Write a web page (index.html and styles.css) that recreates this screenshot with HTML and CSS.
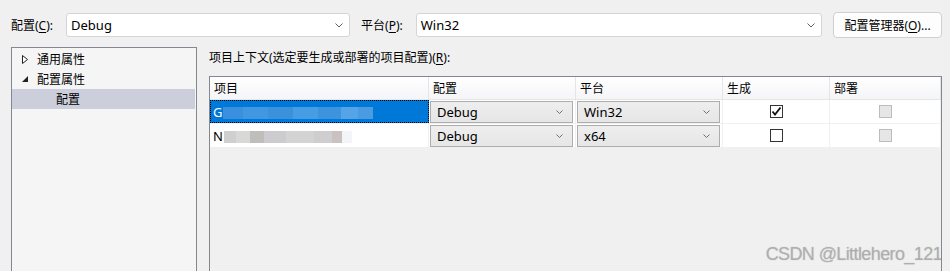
FILE: index.html
```html
<!DOCTYPE html>
<html lang="zh-CN">
<head>
    <meta charset="UTF-8">
    <meta name="viewport" content="width=device-width, initial-scale=1.0">
    <title>配置管理器</title>
    <link rel="stylesheet" href="styles.css">
</head>
<body>
    <div class="toolbar">
        <span class="label">配置(<u>C</u>):</span>
        <div class="combo combo-config">
            <span>Debug</span>
            <svg class="chev" width="8" height="5" viewBox="0 0 8 5"><polyline points="0.5,0.5 4,4 7.5,0.5" fill="none" stroke="#606060" stroke-width="1"/></svg>
        </div>
        <span class="label">平台(<u>P</u>):</span>
        <div class="combo combo-platform">
            <span>Win32</span>
            <svg class="chev" width="8" height="5" viewBox="0 0 8 5"><polyline points="0.5,0.5 4,4 7.5,0.5" fill="none" stroke="#606060" stroke-width="1"/></svg>
        </div>
        <button class="btn">配置管理器(<u>O</u>)...</button>
    </div>

    <div class="main">
        <div class="tree">
            <div class="tree-item">
                <span class="arrow"><svg width="6" height="9" viewBox="0 0 6 9"><polygon points="0.5,0.5 5.5,4.5 0.5,8.5" fill="#fff" stroke="#222" stroke-width="1"/></svg></span>
                <span>通用属性</span>
            </div>
            <div class="tree-item">
                <span class="arrow"><svg width="6" height="6" viewBox="0 0 6 6"><polygon points="6,0 6,6 0,6" fill="#222"/></svg></span>
                <span>配置属性</span>
            </div>
            <div class="tree-item child selected">配置</div>
        </div>

        <div class="content">
            <div class="ctx-label">项目上下文(选定要生成或部署的项目配置)(<u>R</u>):</div>
            <div class="grid">
                <div class="row head">
                    <div class="cell">项目</div>
                    <div class="cell">配置</div>
                    <div class="cell">平台</div>
                    <div class="cell">生成</div>
                    <div class="cell">部署</div>
                </div>
                <div class="row">
                    <div class="cell name focused">G<span class="blur blur-sel"></span></div>
                    <div class="cell"><div class="cell-combo"><span>Debug</span><svg width="7" height="4" viewBox="0 0 7 4"><polyline points="0.5,0.5 3.5,3.5 6.5,0.5" fill="none" stroke="#707070" stroke-width="1"/></svg></div></div>
                    <div class="cell"><div class="cell-combo"><span>Win32</span><svg width="7" height="4" viewBox="0 0 7 4"><polyline points="0.5,0.5 3.5,3.5 6.5,0.5" fill="none" stroke="#707070" stroke-width="1"/></svg></div></div>
                    <div class="cell center"><span class="check"><svg width="11" height="11" viewBox="0 0 11 11"><polyline points="1.5,5.5 4,8.5 9.5,1.5" fill="none" stroke="#111" stroke-width="1.8"/></svg></span></div>
                    <div class="cell center"><span class="check disabled"></span></div>
                </div>
                <div class="row">
                    <div class="cell name">N<span class="blur blur-plain"></span></div>
                    <div class="cell"><div class="cell-combo"><span>Debug</span><svg width="7" height="4" viewBox="0 0 7 4"><polyline points="0.5,0.5 3.5,3.5 6.5,0.5" fill="none" stroke="#707070" stroke-width="1"/></svg></div></div>
                    <div class="cell"><div class="cell-combo"><span>x64</span><svg width="7" height="4" viewBox="0 0 7 4"><polyline points="0.5,0.5 3.5,3.5 6.5,0.5" fill="none" stroke="#707070" stroke-width="1"/></svg></div></div>
                    <div class="cell center"><span class="check"></span></div>
                    <div class="cell center"><span class="check disabled"></span></div>
                </div>
            </div>
        </div>
    </div>

    <div class="watermark">CSDN @Littlehero_121</div>
</body>
</html>
```

FILE: styles.css
```css
body {
    margin: 0;
    width: 950px;
    height: 271px;
    overflow: hidden;
    position: relative;
    background: #f0f0f0;
    color: #000;
    font-family: "Noto Sans", "Noto Sans CJK SC", sans-serif;
    font-size: 12px;
}

u {
    text-decoration-thickness: 1px;
    text-underline-offset: 2px;
}

.toolbar {
    display: flex;
    align-items: center;
    height: 26px;
    padding: 12px 8px 0 11px;
}

.label {
    margin-right: 13px;
}

.combo {
    height: 24px;
    box-sizing: border-box;
    display: flex;
    align-items: center;
    justify-content: space-between;
    padding: 0 6px 0 4px;
    background: #fff;
    border: 1px solid #d5d5d5;
    border-radius: 3px;
    font-size: 13px;
}

.combo-config {
    width: 284px;
    margin-right: 11px;
}

.combo-platform {
    flex: 1;
    margin-right: 11px;
}

.btn {
    width: 109px;
    height: 26px;
    padding: 0;
    background: #fdfdfd;
    border: 1px solid #d0d0d0;
    border-radius: 4px;
    font-family: inherit;
    font-size: 12px;
    color: #000;
}

.main {
    display: flex;
    margin-top: 9px;
}

.tree {
    width: 186px;
    height: 230px;
    box-sizing: border-box;
    margin-left: 11px;
    padding-top: 1px;
    background: #f5f5f5;
    border: 1px solid #828790;
    border-bottom: none;
}

.tree-item {
    display: flex;
    align-items: center;
    height: 20px;
    padding-left: 10px;
}

.arrow {
    width: 10px;
    margin-right: 5px;
    display: flex;
    align-items: center;
}

.tree-item.child {
    padding-left: 44px;
}

.tree-item.selected {
    margin: 0 1px 0 0;
    background: #cccedb;
}

.content {
    flex: 1;
    margin-left: 12px;
    margin-right: 8px;
}

.ctx-label {
    height: 20px;
    line-height: 20px;
    padding-top: 1px;
    margin-bottom: 8px;
}

.grid {
    height: 200px;
    border: 1px solid #828790;
    border-bottom: none;
    background: #f0f0f0;
}

.row {
    display: grid;
    grid-template-columns: 219px 147px 147px 107px 1fr;
    height: 24px;
    background: #fff;
    border-bottom: 1px solid #f0f0f0;
    box-sizing: border-box;
}

.row.head {
    height: 23px;
    background: linear-gradient(#ffffff, #f4f5f7);
    border-bottom: 1px solid #e5e5e5;
}

.cell {
    display: flex;
    align-items: center;
    border-right: 1px solid #f0f0f0;
    overflow: hidden;
}

.head .cell {
    padding-left: 4px;
    border-right-color: #e5e5e5;
}

.cell.name {
    padding-left: 3px;
    font-size: 13px;
}

.cell.focused {
    background: #0078d7;
    color: #fff;
    border: 1px dotted #000;
    padding-left: 2px;
}

.cell.center {
    justify-content: center;
}

.blur {
    display: inline-block;
    height: 12px;
    margin-left: 1px;
    margin-top: 2px;
}

.blur-sel {
    width: 150px;
    background: linear-gradient(to right, #3a90de 0 20px, #4298e0 20px 45px, #3b91dc 45px 70px, #469de4 70px 95px, #3d93de 95px 118px, #55a4e8 118px 135px, #4b9be2 135px 150px);
}

.blur-plain {
    width: 128px;
    background: linear-gradient(to right, #cfcfcf 0 12px, #d8d8d6 12px 26px, #c0bebb 26px 40px, #cccbd0 40px 62px, #d3d3d3 62px 90px, #cfcdcf 90px 108px, #c9c2c0 108px 118px, #f3f5f8 118px 128px);
}

.cell-combo {
    flex: 1;
    height: 22px;
    box-sizing: border-box;
    margin: 0 2px 0 1px;
    padding: 0 9px 0 6px;
    display: flex;
    align-items: center;
    justify-content: space-between;
    background: linear-gradient(#eeeeee, #e6e6e6);
    border: 1px solid #adadad;
    font-size: 13px;
}

.check {
    width: 13px;
    height: 13px;
    box-sizing: border-box;
    background: #fff;
    border: 1px solid #333;
    display: flex;
    align-items: center;
    justify-content: center;
}

.check.disabled {
    background: #e6e6e6;
    border-color: #bcbcbc;
}

.watermark {
    position: absolute;
    right: 8px;
    bottom: 7px;
    line-height: 20px;
    font-family: "Liberation Sans", Arial, sans-serif;
    font-size: 18px;
    letter-spacing: -0.6px;
    color: rgba(160, 160, 160, 0.6);
    text-shadow: 0 0 1px rgba(90, 90, 90, 0.35);
}
```
